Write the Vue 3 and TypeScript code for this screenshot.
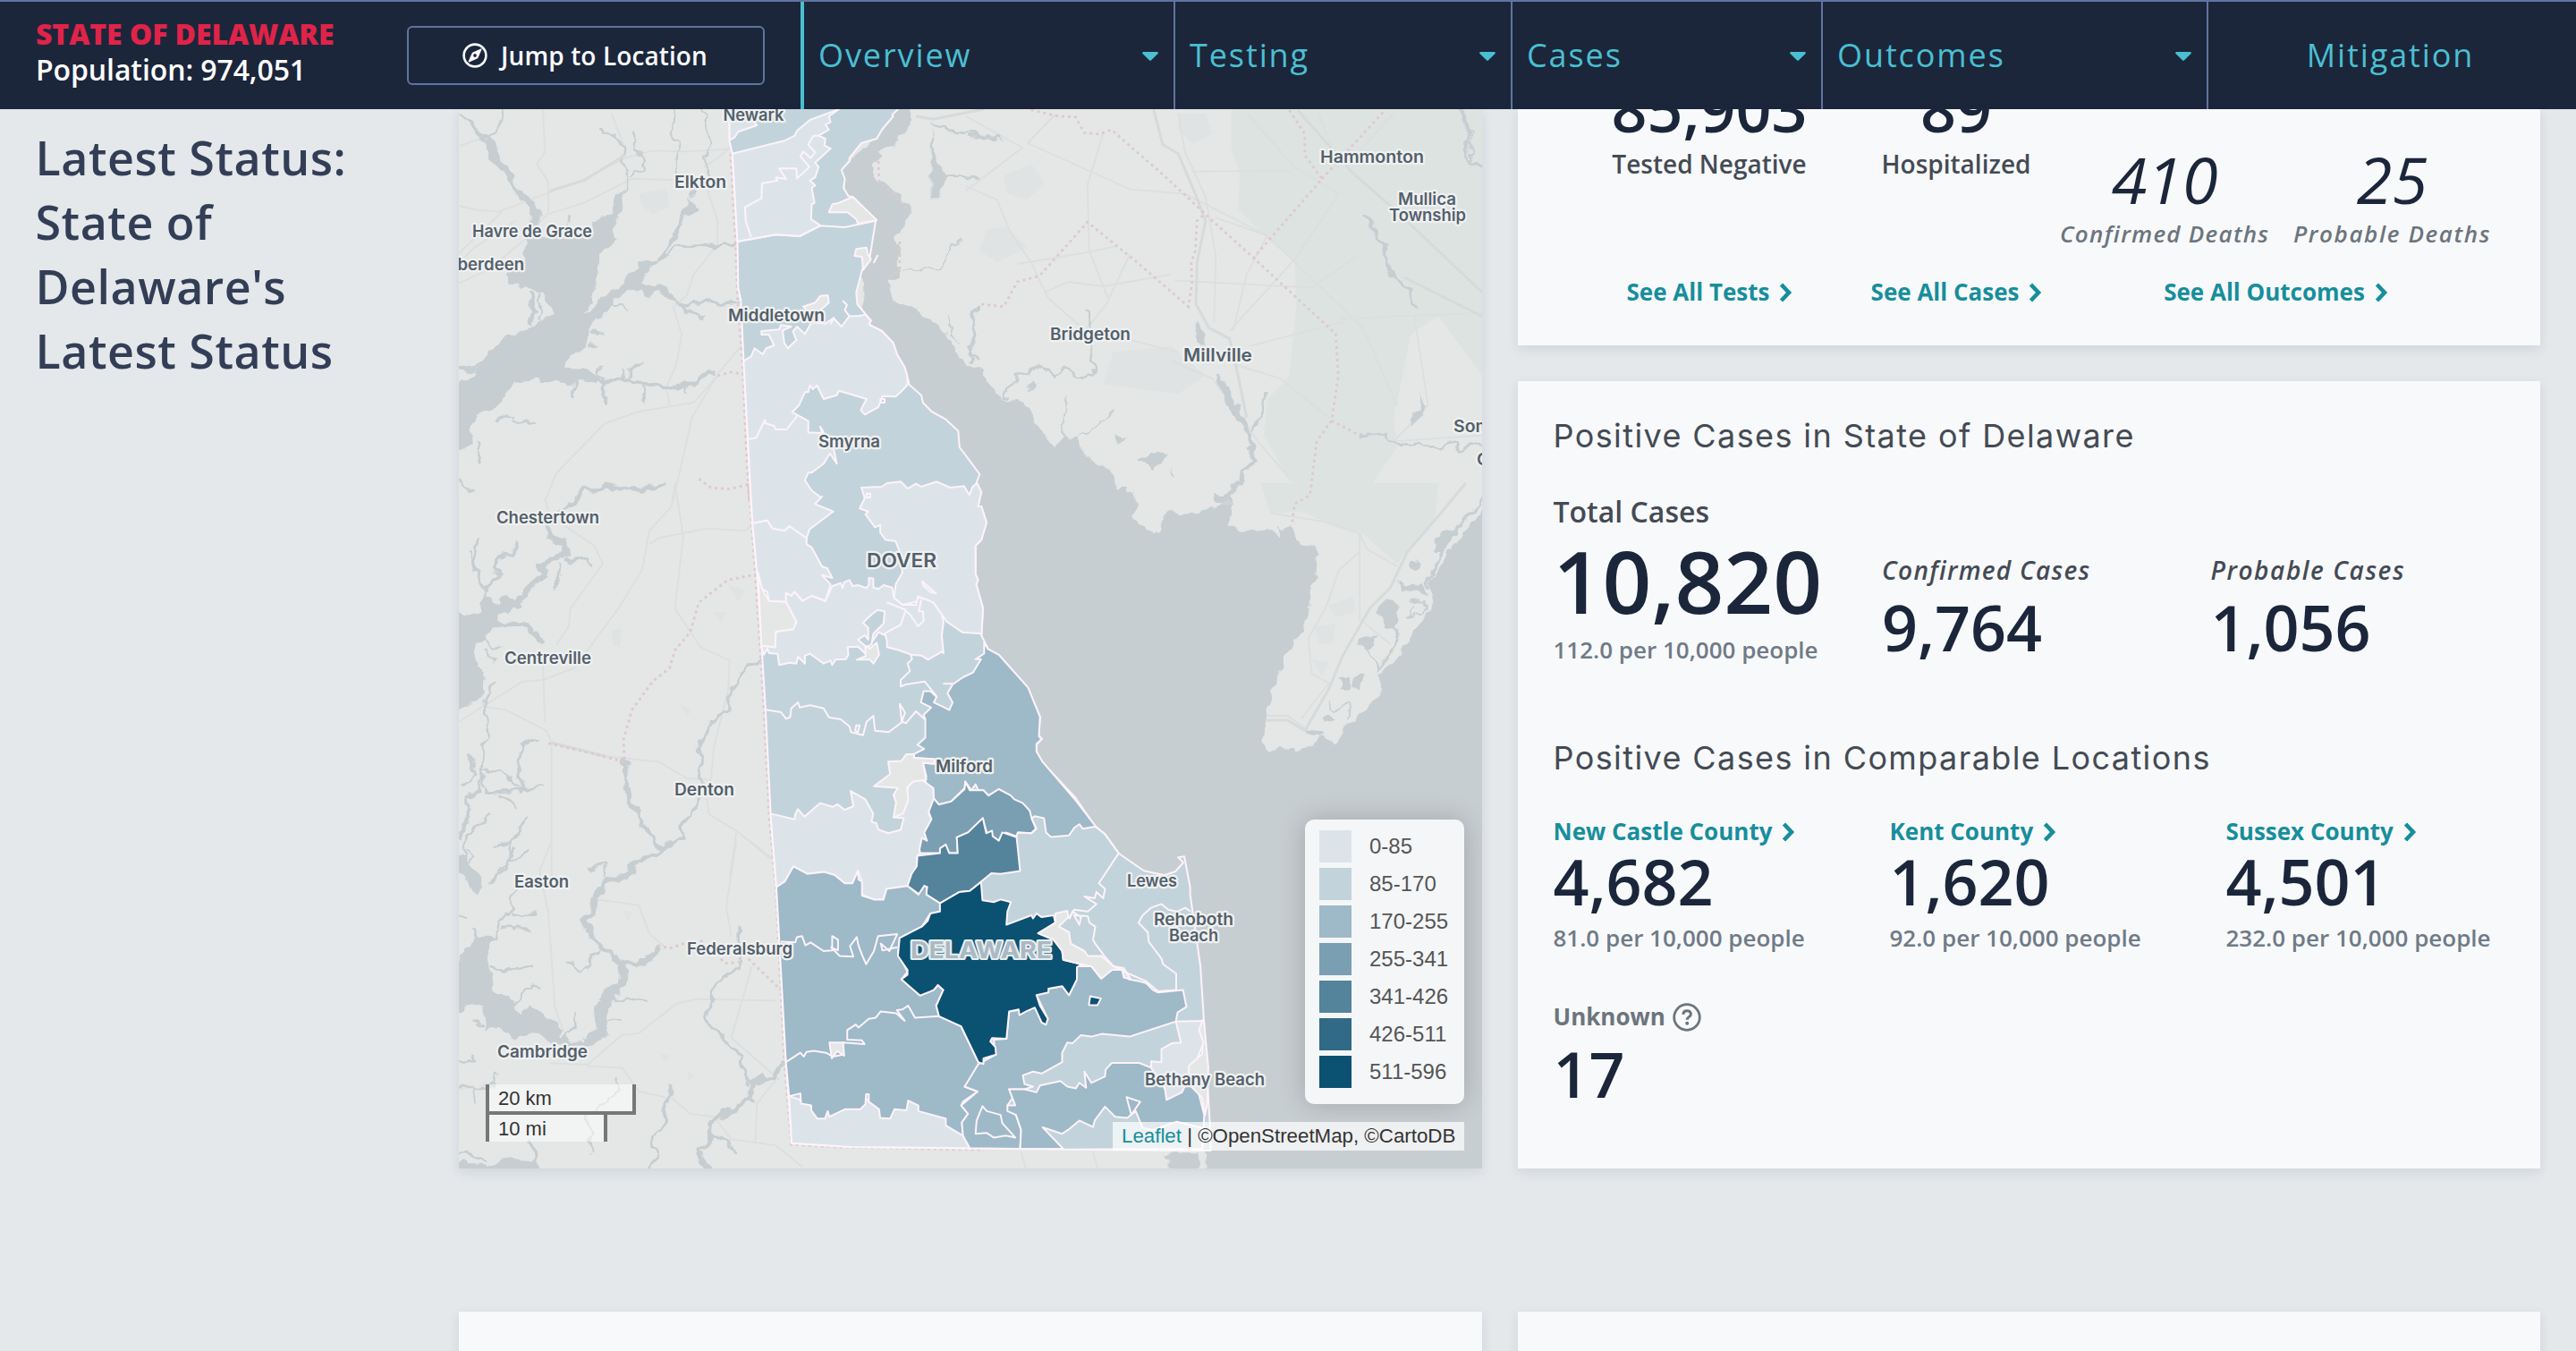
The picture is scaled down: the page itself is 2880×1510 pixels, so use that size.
<script setup lang="ts">
interface Label { t: string; x: number; y: number; w: number; s?: number; kind?: string }
interface Area { level: string; d: string }

// Survey sheets: origin and density of each digitised part of the map.
const sheets: Record<string, [number, number, number, number]> = {
  A: [500, 120, 2.6133, 3],
  B: [500, 540, 2.6133, 3],
  C: [780, 640, 2.6133, 2.3758],
  D: [1080, 900, 2.6133, 3],
  E: [1080, 120, 2.6133, 3],
  F: [1080, 540, 2.6133, 3],
  G: [500, 940, 2.6133, 3],
}

// "A10,20 30,40 B5,6 Z" -> path data; a letter switches to another sheet.
function trace(src: string): string {
  let cur = sheets.A
  let out = ''
  src.split(/\s+/).forEach((tok) => {
    if (tok === 'Z') { out += 'Z'; return }
    let body = tok
    if (sheets[tok[0]]) { cur = sheets[tok[0]]; body = tok.slice(1) }
    const [x, y] = body.split(',').map(Number)
    out += (out ? 'L' : 'M') + (cur[0] + x / cur[2]).toFixed(1) + ' ' + (cur[1] + y / cur[3]).toFixed(1)
  })
  return out
}

const nav = [
  { t: 'Overview', w: 415, menu: true },
  { t: 'Testing', w: 377, menu: true },
  { t: 'Cases', w: 347, menu: true },
  { t: 'Outcomes', w: 431, menu: true },
  { t: 'Mitigation', w: 408, menu: false },
]

const water = [
  'A1355,6 1352,60 1320,110 1270,140 1240,190 1245,220 1270,255 1320,290 1350,330 1350,370 1325,410 1310,440 1322,490 1322,575 1295,575 1290,620 1300,655 1360,665 1400,710 1440,725 1460,770 1510,860 1568,890 E0,870 50,875 65,940 120,985 180,995 200,1060 262,1138 275,1108 325,1110 350,1175 420,1215 445,1270 470,1272 490,1320 F490,20 495,110 515,145 548,182 580,110 600,95 625,103 720,90 750,70 785,70 760,155 820,155 880,160 920,178 945,140 975,200 1000,205 1025,215 1025,290 1015,350 1005,440 930,590 895,690 880,790 865,870 880,895 960,900 1000,885 1050,850 1068,868 1190,735 1212,705 1212,670 1200,640 1215,635 1250,600 1368,400 1355,350 1380,290 1420,220 1508,90 1560,90 D1560,1260 710,1260 705,1160 650,1100 640,600 600,250 450,200 C1100,640 1000,500 800,200 F0,500 0,0 A1500,1200 1350,950 1220,720 1210,560 1230,400 1170,310 1150,210 1250,100 1303,-30 1355,-30 Z',
  'A20,15 90,85 110,110 125,170 220,310 250,370 250,400 268,400 268,340 200,260 130,110 110,85 70,50 20,10 Z',
  'A240,440 225,480 220,520 175,560 175,590 210,600 285,620 310,695 240,740 180,770 120,820 90,880 10,940 10,1170 75,1120 70,1070 110,1020 160,990 200,930 230,912 350,925 430,920 460,900 430,880 340,875 350,850 400,800 420,745 480,660 530,610 570,620 590,640 610,615 675,660 690,670 640,610 620,595 565,590 575,560 600,530 655,505 640,480 690,400 700,360 735,350 710,310 700,290 705,330 650,440 615,515 560,510 560,540 480,610 410,690 430,610 440,500 460,470 495,450 480,400 500,370 520,280 495,290 480,350 420,385 430,420 Z',
  'B10,420 60,445 95,430 110,380 150,400 175,370 200,400 220,420 150,440 150,475 120,510 85,540 80,570 90,620 110,640 105,715 10,775 Z',
  'G10,430 90,320 140,320 120,400 135,500 180,520 210,580 240,550 320,610 330,650 370,670 460,670 400,690 320,680 260,640 200,665 150,620 120,635 100,550 60,560 10,590 Z',
  'G10,20 50,60 90,110 110,160 90,190 50,130 10,90 Z',
  'G10,1075 120,1085 190,1068 262,1078 262,1130 10,1130 Z',
  'A1415,70 1432,170 1460,235 1430,310 1415,310 Z',
  'E675,720 697,770 700,800 680,795 Z',
  'E738,890 770,960 800,1020 820,1090 800,1060 745,960 Z',
  'E190,915 212,930 195,955 180,945 Z', 'E500,1180 540,1160 590,1170 550,1220 Z',
  'E1330,960 1345,1000 1320,1045 1298,1070 1310,1030 1332,1010 Z',
  'E435,1095 475,1110 440,1130 Z', 'E590,1200 610,1240 595,1230 Z',
  'F1365,190 1400,160 1440,150 1400,225 1372,225 Z',
  'F1200,430 1220,400 1245,390 1270,420 1265,460 1250,490 1225,480 Z',
  'F1140,550 1165,510 1195,505 1200,545 1175,560 Z',
  'F1095,650 1115,650 1130,680 1110,700 1095,690 Z', 'F1135,650 1165,640 1170,670 1150,695 1135,680 Z',
  'F1268,320 1290,350 1340,340 1345,365 1300,365 1272,350 Z', 'F1300,265 1325,262 1320,290 1295,290 Z',
  'F1035,790 1060,775 1078,800 1050,810 Z', 'F990,830 1050,835 1040,855 1000,848 Z',
  'F720,30 770,40 775,70 730,65 Z', 'F915,140 940,150 925,178 Z',
  'D575,1162 680,1162 690,1250 600,1250 600,1190 Z',
].map(trace)

const green = [
  'E775,6 775,140 800,220 795,340 870,430 960,520 965,660 945,900 880,980 870,1100 940,1240 1000,1320 1150,1320 1260,1140 1250,1040 1300,760 1380,700 1508,900 1508,6 Z',
  'F860,0 890,100 980,95 1050,130 1160,170 1260,270 1370,120 1380,0 Z',
].map(trace)
const haze = [
  'E620,20 700,20 720,90 660,120 620,70 Z', 'E110,230 190,190 230,250 180,310 120,290 Z', 'E60,410 120,400 180,470 90,520 40,480 Z',
  'E430,820 600,800 700,900 620,960 400,930 Z', 'A560,290 640,270 650,330 600,360 570,330 Z',
  'B480,490 510,490 505,550 485,545 Z', 'B775,430 815,435 800,470 Z', 'B820,340 870,360 850,400 Z', 'B680,740 715,760 700,780 Z',
  'G510,230 540,240 530,270 Z', 'G700,770 725,790 705,800 Z', 'G620,710 650,720 635,740 Z', 'F1060,410 1130,380 1140,430 1080,450 Z',
  'F1010,590 1060,600 1040,650 Z', 'F1020,480 1080,470 1070,540 1030,540 Z',
].map(trace)

const rivers: [number, string][] = [
  [5, 'A430,885 455,925 500,905 560,920 600,935 640,940 700,930 735,910 760,890 785,890'],
  [4, 'A460,900 455,950 470,990'], [3, 'A375,920 380,940 365,970'], [3, 'A570,925 580,960 570,985'],
  [3, 'A450,900 440,870 450,870'], [3, 'A530,905 530,880 575,855'], [3, 'A515,905 510,870'], [3, 'A700,930 700,955'],
  [4, 'A845,455 790,468 730,462 670,468 650,490'], [4, 'A855,650 800,658 770,652 680,665 750,710'],
  [2.5, 'A665,-20 658,80 680,130 670,180 672,235'], [2.5, 'A750,-20 765,120 750,180 770,235 740,270 705,290'],
  [2.5, 'A445,70 460,85 495,95 520,130 518,200 530,230 522,285'], [2.5, 'A548,75 545,140 575,170 570,205 540,230'],
  [3, 'A170,-20 165,50 140,75 120,105'], [6, 'A245,620 250,680 240,730'], [2.5, 'A270,620 268,720'], [3, 'A355,355 352,390'],
  [3, 'A145,1060 150,1035 190,1030 195,1050 255,1060'], [4, 'A20,870 80,880 110,850'], [3, 'A90,1120 100,1195'], [3, 'A20,1230 75,1290'],
  [3, 'A480,660 530,680'], [3, 'A420,760 460,755'], [3, 'A410,800 440,800'],
  [5, 'B640,0 600,12 530,28 500,12 460,10 440,28 400,22 370,65 330,90'],
  [7, 'B330,90 295,140 295,175 340,195 345,235 320,250 270,275 285,310 240,350 200,410'],
  [4, 'B345,250 380,262 405,255 425,275'], [3, 'B325,270 330,310 320,350'], [6, 'B145,475 235,470 255,500 275,540'],
  [4, 'B95,190 75,250 85,310 105,350 102,420'], [4, 'B205,190 185,240 145,245 140,290 155,310 110,355'], [3, 'B60,220 80,290'],
  [3, 'B110,520 130,550 160,545'], [3, 'B110,550 140,600'], [3, 'B135,665 115,715 110,770 125,850 105,880 100,960 110,1030'],
  [4, 'B100,960 95,1030 55,1060 70,1090 45,1150 40,1200'], [3, 'B105,965 160,970 200,1010 225,1030'],
  [4, 'B270,865 235,858 215,880 208,960 225,1030 110,1035'], [3, 'B60,900 80,980 50,1020'], [3, 'B235,1125 185,1190 185,1260 150,1300'],
  [3, 'B225,1030 290,1010'], [3, 'B125,1110 60,1180 50,1260'], [3, 'B150,1045 205,1080'], [3, 'B60,1280 80,1250 60,1230'], [3, 'B240,1230 185,1270'],
  [4, 'B915,590 860,640 830,690 820,750 790,790 750,850 735,890 748,930 735,960 742,1010 725,1060 715,1110 680,1150 695,1190 660,1200 625,1230'],
  [5, 'B520,930 522,1010 530,1060 560,1100 570,1150 605,1190 620,1230 560,1270 530,1310'],
  [7, 'G660,0 620,30 550,75 520,125 480,125 430,190 425,240 395,262 420,310 445,350 480,370 485,390 520,410 570,405 610,380 615,350'],
  [11, 'G518,410 510,480 470,520 455,540'], [13, 'G455,540 450,580 458,640 400,675'], [3, 'G410,92 465,72 465,120'],
  [3, 'G455,360 415,400 400,440 350,405'], [3, 'G480,530 550,530 575,540'], [3, 'G470,590 510,600'],
  [4, 'G855,290 855,420 810,455 780,490 765,560 760,610 810,660 860,720 855,760 885,800 875,820'],
  [6, 'G990,740 950,790 895,805 885,870 830,900 790,930 760,950 770,1000 735,1030 740,1060 765,1120'],
  [4, 'G770,985 820,1010 845,1045'], [4, 'G655,810 655,860 630,885 640,950 600,990 610,1050 585,1120'],
  [3, 'G140,330 150,270 195,230 190,180 240,120'], [3, 'G155,300 200,290 250,310'], [3, 'G190,245 255,245'], [3, 'G95,320 70,290'],
  [4, 'G10,740 80,740 85,710'], [3, 'G10,825 140,825 145,780'], [3, 'G80,830 85,880'], [3, 'G130,430 200,430 250,410'], [3, 'G190,550 245,480 270,490'],
  [3, 'G340,680 345,640 375,620 370,570'], [3, 'G500,800 500,830 410,920 420,1040'], [4, 'G245,1000 262,1060 255,1080'], [3, 'G10,1055 60,1050 120,1075'],
  [3, 'G140,20 180,0 210,-30'], [3, 'G125,140 170,90 200,20'], [3, 'G10,230 60,260'], [3, 'G75,600 110,620'],
  [3, 'E345,680 365,700 362,760 372,820 380,880 340,900 290,880 260,900 240,880 215,865 180,890 140,890 145,920 115,950 120,980'],
  [5, 'E740,890 765,960 800,1020 820,1090 845,1130 825,1160 850,1190 810,1220 790,1270 750,1310'], [3, 'E875,960 860,1030 835,1090'],
  [4, 'E1155,355 1185,380 1200,440 1225,460 1230,520 1250,570 1295,610 1300,650 1315,675'],
  [4, 'E1430,-20 1465,60 1462,170 1480,195 1530,200'], [2.5, 'E1450,40 1475,80 1475,180'],
  [3, 'E1150,1100 1225,1095 1240,1120 1290,1130 1320,1125 1380,1145 1425,1125 1440,1145 1475,1130 1530,1135'],
  [4, 'E30,660 20,700 30,760 12,800 35,850'], [3, 'E0,90 40,105 100,108'], [2, 'E300,960 290,1040 280,1110'], [2, 'E430,1015 380,1070 330,1110'],
  [3, 'A1415,50 1450,60 1480,85 1520,80 1568,105'], [3, 'A1430,230 1500,230 1560,240'], [2, 'A1330,550 1440,540 1500,440'], [3, 'A1540,660 1545,760 1530,860'],
  [2, 'A1470,700 1465,760 1500,790'], [4, 'F1530,20 1440,150 1380,250 1350,350'], [3, 'F1270,510 1230,590 1200,630'], [3, 'F1240,480 1270,510'],
  [3, 'F1175,560 1205,620'], [2, 'F1290,400 1340,390 1340,430 1290,450 1310,410'], [2, 'F1060,730 1080,760 1120,740 1110,790'],
]
const riverPaths = rivers.map(([w, d]) => ({ w: w * 0.9, d: trace(d) }))

const roads = [
  'A34,130 110,100', 'A34,330 90,345 150,350 300,285 400,240 520,170 600,145 700,148 825,140', 'A34,490 160,350', 'A34,590 120,545 230,440 290,360 400,320 540,240 660,243',
  'A280,6 285,150 262,190 295,250 295,350', 'A34,520 80,470 200,380', 'A480,20 520,140', 'A750,240 790,380 790,460 720,560 700,630 660,670 685,760 670,860 640,940 650,1000',
  'A858,800 790,895 715,1040 680,1220 660,1320', 'A790,900 720,990 560,1020 460,1060 320,1225 285,1320', 'A850,110 790,170 750,200',
  'B285,50 300,110 430,210 455,270 360,420 355,480 320,540', 'B665,0 655,80 590,160 570,290 500,420 410,560 370,620 280,660 220,665 110,745 34,800', 'B665,0 690,180 665,420 740,550 825,595 820,700 780,880 770,1000',
  'B590,205 620,183 760,152 870,160 890,140', 'B280,600 285,800', 'B110,750 170,760 290,830 305,870 460,915 620,935 700,990 770,995', 'B305,870 305,1320', 'B750,1000 765,1110 850,1170 945,1260', 'B845,1170 825,1320',
  'G305,0 270,100 295,240 315,560 340,640', 'G845,0 815,220 830,320', 'G885,0 950,60', 'G430,195 560,215 590,310 640,360', 'G890,420 830,660 880,710 970,800', 'G960,535 730,530 670,545 560,645 510,650 410,750 300,745', 'G410,755 510,760 560,840 660,865 710,915 780,925 830,1000 960,1020 1040,1095', 'G960,800 905,880 900,1010',
  'E0,30 165,135 0,280', 'E180,120 480,275 640,290 880,430 1160,740 1260,1000', 'E180,120 260,25', 'E0,265 90,310 130,420 190,520 240,640 340,740 620,820', 'E400,90 355,260 360,480 415,640', 'E150,525 360,485 440,465', 'E610,580 1010,605 1140,500', 'E660,215 950,213', 'E620,20 640,150 700,300 730,500 725,720', 'E820,20 960,200 1090,290 960,510 770,750', 'E1090,710 1260,700 1508,690', 'E880,430 820,560 780,750', 'E230,620 300,585 400,600 600,560', 'E830,800 1100,720', 'E780,860 920,910 1060,1040', 'E730,370 880,430', 'E1030,20 1090,200', 'E1250,20 1130,170', 'E1310,700 1350,1000 1250,1120 1508,1100',
  'E480,490 410,660 340,760', 'E600,850 720,910 860,1130 950,1250', 'F890,100 1050,130 1150,170 1150,460', 'F1150,230 1090,290 1050,420 1000,520 1010,640 1060,670', 'F1260,280 1170,220 1150,170', 'F880,780 940,780 1000,830', 'F1060,670 980,790',
  'F1165,470 1240,540', 'D160,1160 175,1217', 'D370,1160 385,1217',
].map(trace)

const highways = [
  'E548,6 575,125 620,155 670,290 700,380 675,520 672,660 710,740 770,775 795,900 820,1040', 'E970,10 1130,220 1260,350 1508,620', 'E1280,570 1508,700',
  'F1460,0 1380,110 1290,230 1240,350 1180,420 1100,580 1060,690 990,830', 'A300,280 400,245 520,160', 'B305,870 460,915', 'F878,795 940,795 990,830', 'A1370,30 1420,40 1568,6',
].map(trace)

const borders = [
  'A828,155 842,450 848,640 862,850 872,1110 882,1320 B880,0 900,300 915,570 925,760 940,1110 G960,160 985,740 1005,1018 1140,1026 1568,1036', 'B905,305 820,325 735,400 710,500 665,560 650,620 600,665 540,760 515,860 518,935 420,905 285,870',
  'A790,900 830,888 866,895', 'A735,1245 770,1275 820,1280 880,1265', 'E190,8 270,30 320,32 345,85 390,90 425,75 580,230 720,380 840,505 1080,760 1088,900 1068,1050 1025,1120 1005,1300 F960,70 952,140',
  'E945,10 990,90 990,160 1040,240 840,505', 'E1040,240 1222,12', 'E1068,1050 1150,1100', 'E45,660 110,668 150,585 215,565 355,385 500,520 650,668 660,590 658,520 670,480 675,380 695,360', 'G615,350 650,360 700,340 750,335', 'G800,395 810,410 860,405', 'G880,395 930,450 975,500',
  'A1260,180 1262,250 1300,285 1350,350', 'A1322,450 1322,540 1295,570',
].map(trace)

const areas: Area[] = [
  { level: 'l1', d: 'A824,0 825,115 833,155 848,450 850,605 858,645 866,850 878,1110 887,1320 B892,135 905,300 920,570 930,760 945,1110 C230,835 258,1300 275,1515 450,1525 1070,1532 D660,1158 715,1158 712,1060 695,720 685,540 655,300 655,275 638,172 620,175 635,192 612,222 580,235 520,220 447,162 405,95 378,72 F320,1055 222,935 206,900 206,878 222,857 212,846 217,785 180,685 98,578 65,557 45,510 50,420 30,340 35,325 28,305 28,210 45,190 60,132 45,78 35,78 45,30 30,0 E40,1230 0,1168 A1497,1140 1493,1085 1455,1045 1415,1020 1390,990 1385,965 1350,930 1343,895 1335,868 1315,830 1303,790 1270,750 1232,728 1238,715 1220,690 1198,660 1195,620 1212,545 1235,500 1252,380 1185,300 1172,298 1158,270 1162,240 1152,210 1175,180 1175,170 1210,120 1255,105 1270,75 1303,30 1300,25 1322,0 Z' },
  { level: 'l0', d: 'A824,0 850,0 905,60 850,82 840,100 825,110 Z' },
  { level: 'l0', d: 'A833,155 985,112 1015,95 1022,78 1060,42 1145,6 1115,30 1120,50 1105,58 1115,75 1085,95 1105,105 1102,128 1120,138 1075,185 1085,200 1075,235 1060,245 1075,262 1065,270 1073,320 1065,325 1063,375 1085,392 1090,397 1030,432 960,427 848,450 Z' },
  { level: 'none', d: 'A888,435 872,380 870,335 918,305 920,255 965,245 960,235 990,240 970,205 1020,205 1022,238 1058,200 1032,165 1040,148 1062,170 1075,150 1055,125 1070,95 1085,95' },
  { level: 'none', d: 'A848,450 960,427 1030,432 1090,397 1162,402 1252,380' },
  { level: 'land', d: 'A1185,300 1255,378 1200,390 1195,375 1170,352 1115,352 1125,325 1140,322 Z' },
  { level: 'land', d: 'A1195,475 1225,470 1228,490 1238,510 1215,545 1212,502 1190,498 Z' },
  { level: 'none', d: 'A1258,495 1246,522' },
  { level: 'land', d: 'A1040,668 1075,655 1090,632 1112,630 1115,655 1080,690 1060,690 Z' },
  { level: 'none', d: 'A1155,648 1168,662 1162,680 1175,700' },
  { level: 'l0', d: 'A866,850 888,835 898,808 922,828 932,808 955,798 940,762 918,762 918,750 970,745 975,730 1005,735 980,748 985,790 995,808 1020,780 1010,752 1022,735 1045,760 1065,720 1105,725 1130,705 1120,725 1130,708 1152,735 1175,700 1200,700 1222,695 1238,715 1232,728 1270,750 1303,790 1315,830 1335,868 1343,895 1345,930 1325,955 1310,970 1272,968 1260,1005 1220,1030 1208,1015 1225,978 1145,950 1138,965 1100,978 1080,932 1068,945 1060,932 1055,955 1045,955 1028,998 1008,1022 1055,1052 1055,1090 1095,1092 1090,1070 1110,1110 1130,1150 1138,1195 1118,1160 1100,1195 1065,1225 1055,1225 1045,1250 1065,1285 1092,1308 B1095,45 1075,70 1128,95 1058,155 1050,185 1000,145 985,160 950,152 935,125 892,135 885,0 A878,1110 Z' },
  { level: 'none', d: 'A878,1113 903,1108 928,1048 930,1060 955,1068 960,1080 992,1080 1022,1035' },
  { level: 'l0', d: 'B892,135 935,125 950,152 985,160 1000,145 1050,185 1050,205 1065,215 1095,280 1110,285 1125,318 1095,308 1120,340 1105,395 1065,378 1038,395 1015,365 1005,378 990,368 990,398 940,395 935,365 920,355 905,300 Z' },
  { level: 'l0', d: 'B1210,15 1270,12 1285,0 1325,-5 1345,18 1370,2 1385,12 1430,-5 1470,15 1510,10 1525,40 1535,12 1548,0 F45,30 35,78 45,78 60,132 45,190 28,210 28,305 35,325 30,340 50,420 45,510 B1562,505 1505,500 1460,465 1445,440 1400,390 1330,408 1305,385 1310,340 1330,300 1325,240 1310,195 1280,190 1265,165 1265,140 1250,148 1222,105 1230,95 1205,85 1220,50 Z' },
  { level: 'l0', d: 'B990,398 990,368 1005,378 1015,365 1038,395 1065,378 1105,395 1125,345 1150,335 1155,352 1160,332 1175,325 1185,345 1200,342 1225,352 1232,340 1232,318 1245,320 1245,350 1260,355 1275,342 1300,350 1305,385 1330,408 1370,408 1375,380 1400,390 1420,400 1445,440 1450,465 1445,510 1450,570 1445,565 1405,592 1385,578 1355,575 1320,560 1285,550 1285,530 1280,510 1260,500 1240,535 1220,570 1200,548 1170,550 1172,575 1165,590 1135,592 1125,610 1120,595 1100,605 1060,572 1045,578 1045,605 1025,582 1020,605 1000,602 970,610 965,572 940,570 935,555 925,575 918,545 958,550 960,498 1010,490 1020,465 Z' },
  { level: 'land', d: 'B908,300 920,355 940,395 990,398 1020,465 1010,490 960,498 958,550 918,545 Z' },
  { level: 'l1', d: 'B1215,468 1240,440 1258,425 1278,430 1275,470 1245,505 1240,540 1225,550 1200,525 1220,510 1230,525 1230,485 Z' },
  { level: 'none', d: 'B1285,400 1340,425 1325,475 1300,490 1270,510' },
  { level: 'none', d: 'B1340,430 1352,440 1375,480 1392,462 1390,430 1378,430 1385,390' },
  { level: 'none', d: 'B1388,330 1428,370 1412,365 1390,342 Z' },
  { level: 'none', d: 'B1225,35 1236,35 1236,48 1225,48 Z' },
  { level: 'none', d: 'A1266,978 1278,978 1278,990 1266,990 Z' },
  { level: 'land', d: 'B1222,545 1235,555 1255,535 1262,575 1245,605 1235,592 1197,592 1222,580 Z' },
  { level: 'none', d: 'B930,760 975,768 990,790 1002,785 1005,755 1025,735 1030,752 1060,745 1100,755 1115,785 1150,792 1175,815 1180,835 1215,845 1225,800 1245,780 1250,830 1290,835 1330,800 1340,805 1370,765 1395,792' },
  { level: 'none', d: 'B1322,740 1338,770 1328,800 Z' }, { level: 'none', d: 'B1192,830 1195,812 1205,812 1200,835 Z' },
  { level: 'none', d: 'B1355,575 1358,590 1345,605 1352,630 1325,660 1325,682 1340,675 1395,665 1430,715' },
  { level: 'l2', d: 'C837,185 848,203 880,218 965,305 1000,383 997,435 1005,442 990,455 990,475 1008,503 1100,600 1163,674 1125,680 1115,668 1100,678 1085,698 1032,702 1018,690 1012,652 985,647 975,652 965,630 920,600 880,575 850,592 835,578 820,578 812,562 800,578 782,555 780,572 740,608 705,616 690,600 688,572 665,560 668,540 658,505 692,508 692,495 632,492 632,482 662,468 642,457 665,438 665,388 660,378 682,358 652,345 660,315 680,315 698,330 690,345 720,358 735,365 745,345 730,320 745,297 775,278 805,265 828,230 812,230 837,215 Z' },
  { level: 'none', d: 'C717,295 745,295' },
  { level: 'l0', d: 'C213,640 283,655 285,642 293,628 312,648 358,612 395,622 408,615 430,630 455,620 447,580 490,602 513,640 508,662 522,665 528,682 557,692 593,683 602,652 575,650 605,630 600,600 615,570 620,555 655,550 688,572 690,600 675,640 683,655 665,695 670,712 650,745 642,752 640,780 625,800 615,832 552,840 543,868 515,868 480,855 478,815 468,792 452,825 430,825 400,803 370,795 320,800 280,780 255,820 230,835 Z' },
  { level: 'land', d: 'C515,567 562,535 557,502 595,500 610,482 632,482 632,492 692,495 690,508 658,505 668,550 630,555 612,570 615,605 600,640 572,650 580,610 572,590 585,572 Z' },
  { level: 'l3', d: 'C690,600 705,616 740,608 780,575 782,555 795,578 835,578 850,592 880,575 915,592 925,602 950,612 970,632 975,650 988,680 975,692 935,690 932,700 900,690 880,712 845,692 833,652 790,690 757,703 760,745 735,745 722,725 708,745 650,745 648,735 655,705 670,712 662,690 683,655 675,635 Z' },
  { level: 'l4', d: 'C642,752 708,745 708,732 725,722 735,745 760,745 757,703 790,690 833,652 843,692 860,685 862,700 880,712 890,690 932,703 942,792 885,800 858,798 795,845 765,848 708,878 668,855 670,835 662,832 648,855 613,832 625,800 640,780 Z' },
  { level: 'none', d: 'C935,690 975,692 990,680 975,652' },
  { level: 'none', d: 'C1163,674 1190,695 1230,745 1172,825 1190,840 1185,865 1165,848 1160,865 1130,860 1165,880 1140,900 1100,895 1085,920' },
  { level: 'l0', d: 'C267,1390 300,1400 720,1400 775,1495 795,1528 450,1525 275,1515 Z' },
  { level: 'l2', d: 'C230,835 255,820 280,780 320,800 370,795 400,803 430,825 452,825 468,792 470,815 480,820 480,858 515,868 543,868 552,840 613,832 645,855 662,832 670,835 668,855 708,878 708,900 680,905 655,940 590,970 585,1010 613,1060 595,1080 650,1123 690,1108 702,1095 718,1108 697,1150 705,1178 770,1205 820,1300 835,1305 780,1365 818,1378 775,1405 770,1415 790,1437 772,1460 775,1495 725,1468 725,1450 645,1430 645,1415 615,1402 610,1428 575,1425 562,1450 533,1448 530,1425 500,1405 500,1385 492,1385 490,1412 475,1425 430,1425 385,1445 380,1430 372,1450 350,1450 332,1428 332,1415 302,1410 300,1383 267,1390 258,1300 Z' },
  { level: 'none', d: 'C243,980 285,982 290,968 305,965 315,990 330,982 368,1005 393,1003 393,965 410,975 410,1003 390,995 415,1018 455,1020 445,992 465,968 470,990 480,1015 492,1040 515,1005 527,965 583,960 560,1005 535,985 540,1003 583,995' },
  { level: 'none', d: 'C258,1300 300,1275 310,1285 318,1273 340,1270 375,1275 395,1285 425,1280 425,1248 488,1252 480,1242 437,1240 437,1215 462,1200 470,1208 500,1185 520,1182 535,1165 580,1170 605,1190 582,1162 598,1160 615,1150 635,1182 705,1178' },
  { level: 'land', d: 'C385,1248 425,1248 428,1283 408,1270 392,1290 Z' },
  { level: 'l2', d: 'C820,1305 870,1280 865,1240 902,1238 910,1165 985,1155 1015,1200 1023,1185 990,1122 1025,1105 1065,1098 1085,1122 1108,1080 1105,1045 1150,1045 1178,1078 1210,1055 1240,1052 1260,1080 1290,1085 1310,1090 1330,1108 1345,1115 1418,1108 1428,1153 1402,1168 1397,1192 1262,1232 1180,1225 1150,1232 1120,1228 1095,1250 1080,1248 1065,1275 1065,1300 1005,1330 980,1325 950,1335 955,1358 980,1365 955,1372 910,1372 920,1395 905,1415 930,1418 912,1430 930,1440 945,1480 942,1530 795,1528 775,1495 772,1460 790,1437 770,1415 818,1378 780,1365 Z' },
  { level: 'l2', d: 'C955,1372 990,1380 1000,1362 1060,1350 1080,1365 1105,1370 1115,1355 1135,1368 1130,1325 1150,1355 1190,1338 1192,1320 1210,1302 1290,1302 1340,1320 1400,1350 1460,1370 1480,1440 1475,1530 942,1530 945,1480 930,1440 905,1430 905,1415 928,1415 910,1372 Z' },
  { level: 'l1', d: 'C1008,1473 1065,1490 1085,1478 1115,1455 1155,1472 1160,1455 1190,1418 1220,1445 1255,1448 1280,1430 1300,1475 1330,1480 1400,1458 1475,1475 1475,1530 1070,1532 Z' },
  { level: 'none', d: 'C832,1417 845,1430 885,1440 890,1462 928,1500 900,1495 865,1500 845,1488 812,1490 815,1455 Z' },
  { level: 'none', d: 'C1253,1393 1293,1405 1267,1440 Z' },
  { level: 'land', d: 'D695,720 660,735 680,760 692,795 690,835 650,870 655,940 690,980 698,1040 705,1000 708,880 Z' },
  { level: 'l0', d: 'C1397,1192 1475,1190 1465,1215 1478,1248 1460,1290 1435,1310 1435,1340 1415,1380 1370,1400 1365,1370 1325,1315 1325,1298 1355,1300 1355,1265 1385,1250 1412,1248 Z' },
  { level: 'l6', d: 'C708,878 765,848 795,845 828,822 832,870 865,875 885,868 915,875 905,900 902,935 975,910 980,918 990,905 1005,915 1040,910 1045,930 995,958 1040,975 1065,1005 1068,1028 1122,1040 1108,1048 1108,1080 1085,1122 1065,1098 1025,1105 1025,1115 990,1122 1000,1150 1023,1185 1018,1200 1005,1195 985,1155 960,1165 940,1175 938,1160 910,1165 902,1238 860,1236 855,1245 870,1260 872,1280 835,1290 835,1305 820,1300 770,1205 705,1178 697,1150 718,1108 702,1095 690,1108 680,1112 650,1123 595,1080 613,1068 613,1055 585,1018 590,970 655,940 672,925 680,905 708,900 Z' },
  { level: 'l6', d: 'C1147,1125 1178,1131 1168,1149 1143,1148 Z' },
  { level: 'land', d: 'C1045,905 1080,898 1083,915 1055,940 1085,955 1090,985 1130,1005 1140,1018 1180,1018 1215,1045 1245,1050 1265,1080 1245,1075 1240,1055 1210,1055 1180,1078 1150,1045 1122,1040 1068,1028 1065,1005 1040,975 995,958 1045,930 Z' },
  { level: 'none', d: 'C1440,900 1425,890 1400,900 1375,895 1355,880 1325,890 1300,910 1288,930 1315,955 1318,980 1355,1025 1360,1040 1398,1065 1398,1108 1345,1112 1310,1085 1260,1065 1215,1045 1190,1020 1165,990 1155,975 1162,940 1145,930 1140,912 1100,910 1115,935 1120,915 1095,900 1085,920' },
]
const areaPaths = areas.map((a) => ({ level: a.level, d: trace(a.d) }))

const labels: Label[] = [
  { t: 'Newark', x: 808.5, y: 134.5, w: 68 }, { t: 'Elkton', x: 754, y: 210, w: 58 },
  { t: 'Havre de Grace', x: 528, y: 264.5, w: 134 }, { t: 'Aberdeen', x: 498, y: 302, w: 88 },
  { t: 'Middletown', x: 814, y: 358.5, w: 108 }, { t: 'Smyrna', x: 915, y: 499.5, w: 69 },
  { t: 'Hammonton', x: 1476, y: 182, w: 116 }, { t: 'Mullica', x: 1563, y: 228.5, w: 65 }, { t: 'Township', x: 1553, y: 246.5, w: 86 },
  { t: 'Bridgeton', x: 1174, y: 380, w: 90 }, { t: 'Millville', x: 1323, y: 403.5, w: 77, s: 20 },
  { t: 'Som', x: 1625, y: 483, w: 42 }, { t: 'O', x: 1651, y: 519.5, w: 15 },
  { t: 'Chestertown', x: 555, y: 585, w: 115 }, { t: 'Centreville', x: 564, y: 741.5, w: 97 },
  { t: 'Denton', x: 754, y: 888.5, w: 67 }, { t: 'DOVER', x: 969, y: 634, w: 78, s: 21 }, { t: 'Milford', x: 1046, y: 862.5, w: 64 },
  { t: 'Easton', x: 575, y: 991.5, w: 61 }, { t: 'Federalsburg', x: 768, y: 1067, w: 118 }, { t: 'Cambridge', x: 556, y: 1181.5, w: 101 },
  { t: 'DELAWARE', x: 1018, y: 1070.5, w: 158, s: 26, kind: 'state' }, { t: 'Lewes', x: 1260, y: 991, w: 56 },
  { t: 'Rehoboth', x: 1290, y: 1033.5, w: 89 }, { t: 'Beach', x: 1307, y: 1051.5, w: 55 }, { t: 'Bethany Beach', x: 1280, y: 1212.5, w: 134 },
]

const legend = [
  { t: '0-85', c: 'l0' }, { t: '85-170', c: 'l1' }, { t: '170-255', c: 'l2' }, { t: '255-341', c: 'l3' },
  { t: '341-426', c: 'l4' }, { t: '426-511', c: 'l5' }, { t: '511-596', c: 'l6' },
]
const counties = [
  { t: 'New Castle County', n: '4,682', r: '81.0 per 10,000 people' },
  { t: 'Kent County', n: '1,620', r: '92.0 per 10,000 people' },
  { t: 'Sussex County', n: '4,501', r: '232.0 per 10,000 people' },
]
</script>

<template>
  <div class="page">
    <header class="bar">
      <div class="place">
        <div class="place-name">STATE OF DELAWARE</div>
        <div class="place-pop">Population: 974,051</div>
      </div>
      <button class="jump">
        <svg width="28" height="28" viewBox="0 0 28 28"><circle cx="14" cy="14" r="12.4" fill="none" stroke="currentColor" stroke-width="2.6" /><path fill="currentColor" fill-rule="evenodd" d="M20.6 6.4 11.6 10.6a2 2 0 0 0-1 1L6.7 20.6c-.3.6.3 1.1.9.9l8.9-4.1a2 2 0 0 0 1-1l4-9c.3-.6-.3-1.2-.9-1ZM15.3 15.3a1.8 1.8 0 1 1-2.6-2.6 1.8 1.8 0 0 1 2.6 2.6Z" /></svg>
        <span>Jump to Location</span>
      </button>
      <nav class="nav">
        <a v-for="n in nav" :key="n.t" class="tab" :class="{ plain: !n.menu }" :style="{ width: n.w + 'px' }">
          <span>{{ n.t }}</span>
          <svg v-if="n.menu" width="18" height="10" viewBox="0 0 18 10"><path fill="currentColor" d="M1.6 0h14.8c1.3 0 1.9 1 1.1 1.9L10.1 9.3a1.6 1.6 0 0 1-2.2 0L.5 1.9C-.3 1 .3 0 1.6 0Z" /></svg>
        </a>
      </nav>
    </header>

    <main class="main">
      <h2 class="title">Latest Status:<br>State of<br>Delaware's<br>Latest Status</h2>

      <div class="left">
        <section class="map">
          <svg class="canvas" width="1144" height="1184" viewBox="513 122 1144 1184">
            <defs>
              <filter id="shore" filterUnits="userSpaceOnUse" x="493" y="102" width="1184" height="1224">
                <feTurbulence type="fractalNoise" baseFrequency="0.07" numOctaves="2" seed="4" />
                <feDisplacementMap in="SourceGraphic" scale="14" xChannelSelector="R" yChannelSelector="G" />
              </filter>
            </defs>
            <path v-for="(d, i) in green" :key="'g' + i" :d="d" class="green" />
            <path v-for="(d, i) in haze" :key="'h' + i" :d="d" class="haze" />
            <path v-for="(d, i) in roads" :key="'r' + i" :d="d" class="road" />
            <g filter="url(#shore)">
              <path v-for="(d, i) in water" :key="'w' + i" :d="d" class="water" />
              <path v-for="(r, i) in riverPaths" :key="'v' + i" :d="r.d" class="river" :stroke-width="r.w" />
            </g>
            <path v-for="(d, i) in highways" :key="'m' + i" :d="d" class="highway" />
            <path v-for="(d, i) in borders" :key="'b' + i" :d="d" class="border" />
            <path v-for="(a, i) in areaPaths" :key="'a' + i" :d="a.d" class="area" :class="a.level" />
            <text v-for="l in labels" :key="l.t" :x="l.x" :y="l.y" :textLength="l.w" lengthAdjust="spacingAndGlyphs" :font-size="l.s || 18.5" class="town" :class="l.kind">{{ l.t }}</text>
          </svg>
          <div class="scale">
            <div class="km">20 km</div>
            <div class="mi">10 mi</div>
          </div>
          <div class="corner">
            <ul class="legend">
              <li v-for="k in legend" :key="k.t"><i :class="k.c"></i>{{ k.t }}</li>
            </ul>
            <div class="credit"><a>Leaflet</a> | ©OpenStreetMap, ©CartoDB</div>
          </div>
        </section>
        <section class="next"></section>
      </div>

      <div class="right">
        <section class="summary">
          <div class="col tests">
            <div class="num cut">85,903</div>
            <div class="lab">Tested Negative</div>
            <a class="link">See All Tests<svg class="chev" viewBox="0 0 14 22"><path d="M2.5 2 11 11 2.5 20" /></svg></a>
          </div>
          <div class="col cases">
            <div class="num cut">89</div>
            <div class="lab">Hospitalized</div>
            <a class="link">See All Cases<svg class="chev" viewBox="0 0 14 22"><path d="M2.5 2 11 11 2.5 20" /></svg></a>
          </div>
          <div class="col deaths">
            <div class="pair">
              <div><div class="num it">410</div><div class="lab it tight">Confirmed Deaths</div></div>
              <div><div class="num it">25</div><div class="lab it">Probable Deaths</div></div>
            </div>
            <a class="link">See All Outcomes<svg class="chev" viewBox="0 0 14 22"><path d="M2.5 2 11 11 2.5 20" /></svg></a>
          </div>
        </section>

        <section class="detail">
          <h3 class="h-a">Positive Cases in State of Delaware</h3>
          <div class="totals">
            <div>
              <div class="total-lab">Total Cases</div>
              <div class="big">10,820</div>
              <div class="rate first">112.0 per 10,000 people</div>
            </div>
            <div class="sub"><div class="sub-lab tight">Confirmed Cases</div><div class="num">9,764</div></div>
            <div class="sub"><div class="sub-lab">Probable Cases</div><div class="num">1,056</div></div>
          </div>
          <h3 class="h-b">Positive Cases in Comparable Locations</h3>
          <div class="counties">
            <div v-for="c in counties" :key="c.t">
              <a class="link county">{{ c.t }}<svg class="chev" viewBox="0 0 14 22"><path d="M2.5 2 11 11 2.5 20" /></svg></a>
              <div class="num">{{ c.n }}</div>
              <div class="rate">{{ c.r }}</div>
            </div>
          </div>
          <div class="unknown">Unknown<svg width="32" height="32" viewBox="0 0 32 32"><circle cx="16" cy="16" r="14.3" fill="none" stroke="currentColor" stroke-width="2.8" /><path d="M11.8 12.8c.2-2.600 2-4 4.400-4s4.200 1.400 4.200 3.600c0 3.300-4.200 3.200-4.200 6.400" fill="none" stroke="currentColor" stroke-width="3" /><circle cx="16.2" cy="22.8" r="2" fill="currentColor" /></svg></div>
          <div class="num">17</div>
        </section>
        <section class="next"></section>
      </div>
    </main>
  </div>
</template>

<style>
body { margin: 0; background: #e4e8eb; }
</style>

<style scoped>
.page { width: 2880px; height: 1510px; overflow: hidden; background: #e4e8eb; font-family: "Open Sans", sans-serif; color: #1b263b; }
.bar { box-sizing: border-box; height: 122px; display: flex; background: #1b263b; border-top: 2px solid #62739f; }
.place { flex: none; box-sizing: border-box; width: 455px; padding: 15.5px 0 0 40px; line-height: 40px; font-size: 32px; white-space: nowrap; }
.place-name { color: #e02349; font-weight: 800; letter-spacing: -0.1px; }
.place-pop { color: #fff; font-weight: 600; letter-spacing: -0.1px; }
.jump { flex: none; box-sizing: border-box; width: 400px; height: 66px; margin-top: 27px; display: flex; align-items: center; justify-content: center; gap: 15px; padding: 0 2px 0 0; background: transparent; border: 2px solid #62739f; border-radius: 6px; color: #f8f9fb; font: 600 28px/40px "Open Sans", sans-serif; letter-spacing: 0.1px; }
.nav { flex: none; display: flex; margin-left: 40px; border-left: 4px solid #4bbfd1; width: 1985px; box-sizing: border-box; color: #4bbfd1; }
.tab { box-sizing: border-box; flex: none; display: flex; align-items: center; justify-content: space-between; padding: 0 17px 2px 16px; border-right: 2px solid #62739f; font-size: 36px; letter-spacing: 1.9px; font-weight: 500; }
.tab.plain { border-right: 0; justify-content: center; }
.tab svg { margin-top: 3px; }

.main { display: flex; height: 1388px; }
.title { box-sizing: border-box; flex: 0 0 513px; margin: 0; padding: 18px 0 0 39.5px; font-size: 52px; line-height: 72px; font-weight: 600; letter-spacing: 0.5px; color: #333e56; white-space: nowrap; }
.left { flex: none; width: 1144px; margin-right: 40px; }
.right { flex: none; width: 1143px; }
.map, .summary, .detail, .next { box-shadow: 0 4px 12px rgba(40, 50, 80, .1); background: #f8f9fb; }
.map { position: relative; height: 1184px; overflow: hidden; background: #e4e7e6; }
.canvas { display: block; }
.next { height: 60px; margin-top: 160px; }

.water { fill: #c7ced1; }
.river { fill: none; stroke: #c7ced1; stroke-linejoin: round; }
.green { fill: #dde3e1; }
.haze { fill: #dfe3e3; }
.road { fill: none; stroke: #dcdedf; stroke-width: 1.8; }
.highway { fill: none; stroke: #d7dadb; stroke-width: 3; }
.border { fill: none; stroke: #dfc9cd; stroke-width: 2.8; stroke-dasharray: 3 4; }
.area { stroke: #fef3fa; stroke-width: 2; stroke-linejoin: round; }
.none { fill: none; }
.land { fill: #e4e7e6; }
.l0 { fill: #dce4ea; background: #dce4ea; }
.l1 { fill: #c2d3db; background: #c2d3db; }
.l2 { fill: #9eb9c8; background: #9eb9c8; }
.l3 { fill: #7a9eb2; background: #7a9eb2; }
.l4 { fill: #53849b; background: #53849b; }
.l5 { fill: #306a87; background: #306a87; }
.l6 { fill: #0b5172; background: #0b5172; }
.town { font-family: Inter, "Open Sans", sans-serif; font-weight: 600; fill: #54606b; stroke: #eff1f1; stroke-width: 4.5; stroke-linejoin: round; paint-order: stroke; }
.state { font-weight: 700; fill: #aab8c4; stroke: #e8efee; stroke-width: 4; }

.scale { position: absolute; left: 30px; top: 1090px; font: 22px/32px "Liberation Sans", sans-serif; color: #333; }
.scale div { box-sizing: border-box; border: 4px solid #777; border-top: 0; padding-left: 10px; background: rgba(255, 255, 255, .5); }
.km { width: 168px; height: 34px; }
.scale .mi { width: 136px; height: 30px; border-bottom: 0; }
.corner { position: absolute; right: 20px; top: 794px; display: flex; flex-direction: column; align-items: flex-end; gap: 20px; }
.legend { box-sizing: border-box; width: 178px; height: 318px; margin: 0; padding: 12px 16px; list-style: none; display: flex; flex-direction: column; gap: 6px; background: rgba(248, 249, 251, .93); border-radius: 10px; box-shadow: 0 0 30px rgba(0, 0, 0, .2); font: 24px/36px "Liberation Sans", sans-serif; color: #555; }
.legend li { display: flex; white-space: nowrap; }
.legend i { width: 36px; height: 36px; margin-right: 20px; }
.credit { box-sizing: border-box; height: 32px; width: 393px; padding-left: 10px; background: rgba(255, 255, 255, .7); font: 22.3px/32px "Liberation Sans", sans-serif; color: #333; white-space: nowrap; }
.credit a { color: #178e9c; }

.num { font-size: 70px; line-height: 72px; font-weight: 600; white-space: nowrap; }
.lab { font-size: 28px; line-height: 40px; font-weight: 600; color: #444b54; white-space: nowrap; }
.link { display: flex; align-items: center; font-size: 26px; line-height: 40px; font-weight: 700; color: #178e9c; white-space: nowrap; }
.chev { width: 14px; height: 22px; margin: 1px 0 0 11px; fill: none; stroke: currentColor; stroke-width: 4.6; overflow: visible; }

.summary { height: 264px; box-sizing: border-box; padding-left: 55px; display: flex; overflow: hidden; }
.col { display: flex; flex-direction: column; align-items: center; height: 224px; }
.col .link { margin-top: auto; }
.tests { width: 318px; }
.cases { width: 234px; }
.deaths { width: 480px; }
.cut { margin-top: -37px; margin-bottom: 6px; }
.pair { display: flex; justify-content: space-between; width: 482px; padding-top: 42px; text-align: center; }
.num.it { font-size: 72px; font-weight: 400; font-style: italic; margin-bottom: 5px; }
.lab.it { font-size: 26px; font-style: italic; letter-spacing: 1.6px; color: #6c757d; }
.lab.it.tight { letter-spacing: 1.25px; }

.detail { box-sizing: border-box; height: 880px; margin-top: 40px; padding: 39px 0 0 39.5px; }
h3 { margin: 0; font: 400 36px/44px Inter, "Open Sans", sans-serif; letter-spacing: 1.4px; color: #444b54; white-space: nowrap; }
.totals { display: flex; margin-top: 38.5px; height: 197px; }
.totals > div { width: 367.5px; }
.total-lab { font-size: 32px; line-height: 48px; font-weight: 600; color: #444b54; }
.big { font-size: 96px; line-height: 96px; margin-top: 5px; font-weight: 600; }
.rate { margin-top: 7.5px; font-size: 26px; line-height: 40px; font-weight: 600; color: #6f7b87; white-space: nowrap; }
.rate.first { margin-top: 9.5px; }
.sub { padding-top: 69.5px; }
.sub-lab { font-size: 28px; line-height: 40px; font-weight: 600; font-style: italic; letter-spacing: 1.55px; color: #444b54; margin-bottom: 7.5px; }
.sub-lab.tight { letter-spacing: 1.25px; }
.h-b { margin-top: 80.5px; }
.counties { display: flex; margin-top: 41px; }
.counties > div { width: 376px; flex: none; }
.county { line-height: 38.5px; }
.unknown { display: flex; align-items: center; margin: 48px 0 8px; font-size: 26px; line-height: 40px; font-weight: 700; color: #6c757d; }
.unknown svg { margin: 2px 0 0 8px; }
</style>
